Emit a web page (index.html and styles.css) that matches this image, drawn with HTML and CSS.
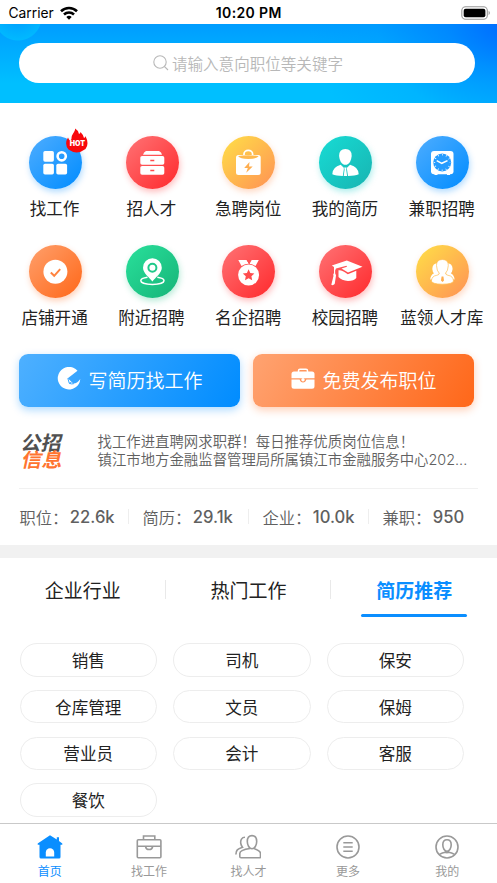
FILE: index.html
```html
<!DOCTYPE html>
<html lang="zh-CN">
<head>
<meta charset="utf-8">
<meta name="viewport" content="width=device-width, initial-scale=1">
<title>直聘网</title>
<link rel="stylesheet" href="styles.css">
</head>
<body>
<div class="app">
  <div class="status">
    <div class="carrier">Carrier
      <svg width="18" height="14" viewBox="0 0 18 14" fill="none" stroke="#000" stroke-width="2.6"><path d="M1 5.2A11.6 11.6 0 0 1 17 5.2"/><path d="M4 8.5A7.3 7.3 0 0 1 14 8.5"/><path d="M6.3 11A4 4 0 0 1 11.7 11L9 13.8Z" fill="#000" stroke="none"/></svg>
    </div>
    <div class="clock">10:20 PM</div>
    <svg class="battery" width="30" height="14" viewBox="0 0 30 14"><rect x=".8" y=".8" width="25.5" height="12.4" rx="3.8" fill="none" stroke="#999" stroke-width="1.1"/><rect x="2.7" y="2.7" width="21.7" height="8.6" rx="2" fill="#000"/><path d="M27.6 4.8Q30.2 7 27.6 9.2Z" fill="#999"/></svg>
  </div>

  <header class="header">
    <div class="search">
      <svg width="16" height="16" viewBox="0 0 16 16" fill="none" stroke="#b8b8b8" stroke-width="1.1"><circle cx="7" cy="7" r="6.2"/><path d="M11.3 11.3L15 15"/></svg>
      <span>请输入意向职位等关键字</span>
    </div>
  </header>

  <nav class="menu">
    <a class="entry"><span class="disc blue">
      <svg viewBox="0 0 53 53" fill="#fff"><rect x="14.3" y="15" width="10.6" height="10.7" rx="1.7"/><rect x="14.3" y="27.7" width="10.6" height="10.8" rx="1.7"/><rect x="27.3" y="27.7" width="10.8" height="10.8" rx="1.7"/><circle cx="32.7" cy="20.3" r="4.1" fill="none" stroke="#fff" stroke-width="2.6"/></svg>
      <span class="hot"><svg viewBox="0 0 22 25"><path d="M5.500 10.500C5.500 6 9 4.500 9.200 .5Q12.500 2.500 13 6Q14.500 5.500 14.500 4Q17.500 7 18 10Q19.500 9.500 19.500 8Q23.500 16 19.500 21Q11 27.500 2.500 21.500Q-2 16 2 9.500Q3 12 4 12.500Q5.500 12 5.500 10.500Z" fill="#f8080c"/></svg><b>HOT</b></span>
    </span>找工作</a>
    <a class="entry"><span class="disc red"><svg viewBox="0 0 53 53" fill="#fff"><path d="M20 15H33Q35.500 16 36 18.700H17Q17.700 16 20 15Z"/><rect x="14.300" y="20" width="24" height="8.700" rx="1.800"/><rect x="14.300" y="30" width="24" height="8.700" rx="1.800"/><path d="M24.300 24.400h4M24.300 34.500h4" stroke="#ff4c4e" stroke-width="1.500"/></svg></span>招人才</a>
    <a class="entry"><span class="disc gold"><svg viewBox="0 0 53 53"><path d="M22 20V18a4.300 3.600 0 0 1 8.600 0V20" fill="none" stroke="#fff" stroke-width="1.700"/><rect x="14" y="19" width="24.700" height="20" rx="2.500" fill="#fff"/><path d="M16 20Q26.300 18.500 36.700 20Q35 23 26.300 23Q18 23 16 20Z" fill="#ffb94e"/><path d="M27.500 26L22.200 32H25.800L24.200 36.800L30.700 30.500H27Z" fill="#ffae4f"/></svg></span>急聘岗位</a>
    <a class="entry"><span class="disc teal"><svg viewBox="0 0 53 53"><path d="M26.400 13Q32.800 13 32.700 20Q32 27 27.800 28.700H25Q20.800 27 20.100 20Q20 13 26.400 13Z" fill="#fff"/><path d="M21.700 28.800L24.800 31.800V33.500L23.800 40Q17 40 13.300 38.300Q13.500 31 21.700 28.800ZM31.100 28.800Q39.500 31 39.700 38.300Q36 40 29 40L28 33.500V31.800Z" fill="#fff"/><path d="M25.200 31.500h2.400l-.4 2l.9 6.500h-3.400l.9-6.500Z" fill="#fff"/></svg></span>我的简历</a>
    <a class="entry"><span class="disc blue"><svg viewBox="0 0 53 53"><rect x="15" y="15" width="22.500" height="23.200" rx="3" fill="#fff"/><path d="M18.500 37h3v2h-3zM31 37h3v2h-3z" fill="#fff"/><circle cx="26.200" cy="26.500" r="9" fill="#259cff"/><circle cx="26.200" cy="26.500" r="7.800" fill="none" stroke="#fff" stroke-width="1.600" stroke-dasharray=".7 3.384" stroke-dashoffset=".35"/><path d="M20.700 24.700L25.800 27.300L31.500 24.600" fill="none" stroke="#fff" stroke-width="1.500"/></svg></span>兼职招聘</a>
    <a class="entry"><span class="disc orange"><svg viewBox="0 0 53 53"><circle cx="26.400" cy="26.700" r="12" fill="#fff"/><path d="M21.800 27.600L25.200 30.800L31.200 24.200" fill="none" stroke="#ff833f" stroke-width="2"/></svg></span>店铺开通</a>
    <a class="entry"><span class="disc green"><svg viewBox="0 0 53 53"><path d="M21.500 32.300Q14.800 33.200 14.800 35.800C15 40.700 37.800 40.700 38 35.800Q38 33.200 31.300 32.300" fill="none" stroke="#fff" stroke-width="1.500"/><path d="M26.400 36.500C23.500 32.500 17 28 17 22.700a9.400 9.400 0 0 1 18.800 0C35.800 28 29.300 32.500 26.400 36.500Z" fill="#fff"/><circle cx="26.400" cy="22.700" r="4" fill="none" stroke="#20c98a" stroke-width="2"/></svg></span>附近招聘</a>
    <a class="entry"><span class="disc red"><svg viewBox="0 0 53 53"><path d="M16.300 15H24.600L27.300 19.200L29.700 15H36.800L33.500 21Q26.500 16.500 19.500 21Z" fill="#fff"/><path d="M24.800 14.500L28 20" stroke="#ff4f51" stroke-width="1"/><circle cx="26.600" cy="30" r="10.500" fill="#fff"/><path d="M26.600 24.300L28.300 28L32.400 28.500L29.400 31.300L30.200 35.300L26.600 33.300L23 35.300L23.800 31.300L20.800 28.500L24.900 28Z" fill="#ff4b4d"/></svg></span>名企招聘</a>
    <a class="entry"><span class="disc red"><svg viewBox="0 0 53 53" fill="#fff"><path d="M12.800 20.500L27.800 15.500L43.500 21.700L29 27.500L22.500 23.500L28 21.700L27.500 20.800L17 23.600Q15.700 25 16.200 28.500Q17.500 30 16.800 32L15.700 39Q14 40.800 12.300 39.800L14.500 31Q13.700 29.500 15 28V22Z"/><path d="M19.500 25.300Q22.500 24.500 28.800 29.300L37.300 25.700V33Q35 36 29 36Q22.500 35.500 19.500 32Z"/></svg></span>校园招聘</a>
    <a class="entry"><span class="disc gold"><svg viewBox="0 0 53 53"><g fill="#fff"><path d="M22.500 18Q16.300 18 16.300 24Q16.500 27 18 28.200Q14.500 30 14.200 34.500L21 34L23 28Z"/><path d="M30.300 18Q36.600 18 36.600 24Q36.300 27 34.800 28.200Q38.300 30 38.600 34.500L32 34L30 28Z"/></g><path d="M26.400 14.500Q32.500 14.500 32.300 20.500Q32 26 29.500 28.300Q30 30 32 30.300Q37.200 31 37.500 36Q37 39 26.400 39.200Q15.700 39 15.400 36Q15.700 31 20.800 30.300Q23 30 23.300 28.300Q20.700 26 20.500 20.500Q20.300 14.500 26.400 14.500Z" fill="#fff" stroke="#ffbd50" stroke-width=".7"/><path d="M25.600 31.500h1.800l.6 4-1.500 1.500-1.500-1.500Z" fill="#ffae4f"/></svg></span>蓝领人才库</a>
  </nav>

  <div class="actions">
    <a class="action resume"><svg width="24" height="24" viewBox="0 0 24 24"><path d="M20.500 3.700A11.300 11.300 0 1 0 23.300 12Q20 16.800 16.200 16.600L10.800 11.300Z" fill="#fff"/><path d="M10.800 11.300L12.300 16.300Q14.500 17.300 16.800 16.700M14.600 15.200L12.300 16.300" fill="none" stroke="#35a5ff" stroke-width="1"/></svg>写简历找工作</a>
    <a class="action post"><svg width="24" height="24" viewBox="0 0 24 24"><path d="M7.500 5V3.800Q7.500 2.300 9 2.300H15Q16.500 2.300 16.500 3.800V5" fill="none" stroke="#fff" stroke-width="1.500"/><path d="M3 4.500H21Q23.500 4.500 23.500 7V11.200H.5V7Q.5 4.500 3 4.500ZM.5 12.500H8.600Q9.500 15.500 12 15.500Q14.500 15.500 15.400 12.500H23.500V19.200Q23.500 21.700 21 21.700H3Q.5 21.700 .5 19.200Z" fill="#fff"/><circle cx="12" cy="12.700" r="1.700" fill="#fff"/></svg>免费发布职位</a>
  </div>

  <section class="news">
    <div class="brand"><b>公招</b><b class="accent">信息</b></div>
    <div class="headlines"><p>找工作进直聘网求职群！每日推荐优质岗位信息！</p><p>镇江市地方金融监督管理局所属镇江市金融服务中心202...</p></div>
  </section>

  <section class="stats">
    <div>职位：<b>22.6k</b></div><div>简历：<b>29.1k</b></div><div>企业：<b>10.0k</b></div><div>兼职：<b>950</b></div>
  </section>

  <section class="picks">
    <div class="tabs"><a>企业行业</a><a>热门工作</a><a class="active">简历推荐</a></div>
    <div class="chips"><a>销售</a><a>司机</a><a>保安</a><a>仓库管理</a><a>文员</a><a>保姆</a><a>营业员</a><a>会计</a><a>客服</a><a>餐饮</a></div>
  </section>

  <nav class="tabbar">
    <a class="current"><svg viewBox="0 0 26 26"><path d="M.7 9.600L13 1.300L19.800 5.500V3.200H22V7L25.300 9.600V10.800H23.500V23Q23.500 24.600 22 24.600H4Q2.500 24.600 2.500 23V10.800H.7Z" fill="#0a8eff"/><path d="M8.800 22.500V18.500a4.200 4.200 0 0 1 8.400 0V22.500Z" fill="#fff"/></svg>首页</a>
    <a><svg viewBox="0 0 26 26" fill="none" stroke="#999" stroke-width="1.600"><rect x="1.300" y="5.800" width="23.600" height="18" rx="1"/><path d="M7.500 5.800V2H18.800V5.800M1.300 12.300H24.900M9.500 12.300Q10 15.500 13.100 15.500Q16.200 15.500 16.700 12.300"/></svg>找工作</a>
    <a><svg viewBox="0 0 26 26" fill="none" stroke="#999" stroke-width="1.600"><path d="M17 1.600C13.500 1.600 12.300 4 12.300 7.500C12.300 11 14.300 14.800 17 14.800C19.700 14.800 21.700 11 21.700 7.500C21.700 4 20.500 1.600 17 1.600Z"/><path d="M15 14.500C11 15 4.800 16.500 4.800 19.500V22.500Q4.800 23.800 6.100 23.800H24.600Q25.500 23.800 25.500 22.500V19.500C25.500 16.500 22 15.500 19 14.500M10 3.300C6.800 3.300 5.200 6 5.800 9.500Q6.200 11.800 7.500 13.200C2.500 15 .9 16 .9 20.500"/></svg>找人才</a>
    <a><svg viewBox="0 0 26 26" fill="none" stroke="#999" stroke-width="1.600"><circle cx="13" cy="13" r="11"/><path d="M8.300 8.800h9.400M8.300 13h9.400M8.300 17.200h9.400"/></svg>更多</a>
    <a><svg viewBox="0 0 26 26" fill="none" stroke="#999" stroke-width="1.600"><circle cx="13" cy="13" r="11"/><path d="M13 5.800C10 5.800 8.800 8 8.800 10.800C8.800 14 10.500 17.300 13 17.300C15.500 17.300 17.200 14 17.200 10.800C17.200 8 16 5.800 13 5.800ZM5 20.600Q8.500 18.600 11.300 18.200V16.500M21 20.600Q17.500 18.600 14.700 18.200V16.500M11.300 18.200Q13 19 14.700 18.200"/></svg>我的</a>
  </nav>
</div>
</body>
</html>
```
FILE: styles.css
```css
* { box-sizing: border-box; }
body { margin: 0; background: #fff; color: #222; font-family: Inter, "Noto Sans CJK SC", sans-serif; }
p { margin: 0; }
.app { width: 497px; height: 883px; display: flex; flex-direction: column; overflow: hidden; }

.status { height: 24px; flex: none; display: grid; grid-template-columns: 1fr auto 1fr; align-items: center; padding: 1px 6px 0 8.5px; color: #000; font-size: 14px; }
.carrier { display: flex; align-items: center; gap: 6px; font-size: 13.8px; }
.clock { font-weight: 600; font-size: 14px; letter-spacing: .35px; margin-right: 2px; }
.battery { justify-self: end; }

.header {
  height: 79px; flex: none; padding: 19px 22px 0 19px;
  background:
    radial-gradient(circle at 18px -7px, rgba(0,200,255,0) 0, rgba(0,200,255,.55) 23px, transparent 24px),
    radial-gradient(ellipse 200px 150px at 102% 0, #006cff 0, rgba(0,125,255,.65) 30%, rgba(0,150,255,.25) 65%, rgba(0,160,255,0) 100%),
    linear-gradient(#009dff, #00bfff 75%);
}
.search { height: 40px; border-radius: 20px; background: #fff; display: flex; align-items: center; justify-content: center; gap: 3px; padding-left: 2px; color: #b8b8b8; font-size: 15.55px; font-weight: 350; }

.menu { flex: none; display: grid; grid-template-columns: repeat(5, 96.8px); grid-auto-rows: 109px; padding: 33px 0 0 6.2px; height: 251px; }
.entry { display: flex; flex-direction: column; align-items: center; font-size: 16.6px; line-height: 24px; gap: 7.5px; white-space: nowrap; }
.disc { width: 53px; height: 53px; border-radius: 50%; position: relative; flex: none; left: .8px; }
.disc > svg { display: block; width: 53px; height: 53px; }
.blue { background: linear-gradient(135deg, #4eadff, #008cff); box-shadow: 1px 3px 6px rgba(0,140,255,.3); }
.red { background: linear-gradient(135deg, #ff7375, #ff292c); box-shadow: 1px 3px 6px rgba(255,41,44,.3); }
.gold { background: linear-gradient(135deg, #ffe047, #ff9155); box-shadow: 1px 3px 6px rgba(255,145,85,.35); }
.teal { background: linear-gradient(135deg, #17dcd5, #18b4b1); box-shadow: 1px 3px 6px rgba(23,205,200,.35); }
.orange { background: linear-gradient(135deg, #ffa06c, #ff6718); box-shadow: 1px 3px 6px rgba(255,103,24,.3); }
.green { background: linear-gradient(135deg, #29e09b, #16b478); box-shadow: 1px 3px 6px rgba(24,190,125,.3); }
.hot { position: absolute; left: 37.5px; top: -8px; width: 22px; height: 25px; }
.hot svg { display: block; width: 22px; height: 25px; }
.hot b { position: absolute; left: 0; right: 0; top: 10px; text-align: center; color: #fff; font-size: 7px; line-height: 12px; font-weight: 900; }

.actions { flex: none; display: grid; grid-template-columns: 221px 221px; gap: 13px; padding-left: 19px; }
.action { height: 53px; border-radius: 9px; display: flex; align-items: center; justify-content: center; gap: 7px; color: #fff; font-size: 19px; font-weight: 350; padding: 0 0 3px 1px; }
.resume { background: linear-gradient(120deg, #4eb0ff, #008cff); box-shadow: 0 3px 9px rgba(0,140,255,.32); }
.post { background: linear-gradient(120deg, #ffa371, #ff6719); box-shadow: 0 3px 9px rgba(255,103,24,.32); }

.news { flex: none; height: 82px; margin: 0 19px; padding-top: 25px; border-bottom: 1px solid #f1f1f1; display: flex; color: #606060; }
.brand { width: 78.5px; padding: 3px 0 0; transform: skewX(-12deg) scaleX(1.04); transform-origin: 20px 50%; font-size: 19.5px; line-height: 17px; color: #505050; }
.brand b { display: block; font-weight: 700; }
.brand .accent { color: #ff7430; padding-left: 4px; }
.headlines { font-size: 14.4px; line-height: 18px; padding-top: 1px; font-weight: 350; white-space: nowrap; }

.stats { flex: none; height: 56px; display: grid; grid-template-columns: 108.5px 120px 120px 120px; padding: 0 0 1px 19.5px; align-items: center; color: #606060; font-size: 16.3px; font-weight: 350; white-space: nowrap; }
.stats div { display: flex; align-items: center; height: 15px; }
.stats div + div { border-left: 1px solid #eee; padding-left: 13.5px; }
.stats b { font-weight: 500; font-size: 16.6px; margin-left: 1.5px; }

.picks { flex: none; height: 278px; border-top: 13px solid #f1f1f1; }
.tabs { display: grid; grid-template-columns: repeat(3, 1fr); height: 60px; }
.tabs a { display: flex; align-items: center; justify-content: center; position: relative; font-size: 19px; padding-top: 2px; }
.tabs a + a::before { content: ""; position: absolute; left: -1px; top: 22px; width: 1px; height: 19px; background: #e9e9e9; }
.tabs .active { color: #0a8eff; font-weight: 700; }
.tabs .active::after { content: ""; position: absolute; left: 30px; right: 30px; top: 56px; height: 3px; border-radius: 2px; background: #0a8eff; }
.chips { display: grid; grid-template-columns: repeat(3, 137.5px); grid-auto-rows: 33.6px; gap: 13.2px 16px; padding: 25px 0 0 19.5px; }
.chips a { border: 1px solid #ededed; border-radius: 17px; display: flex; align-items: center; justify-content: center; font-size: 16.6px; }

.tabbar { flex: none; height: 60px; border-top: 1px solid #c9c9c9; display: grid; grid-template-columns: repeat(5, 1fr); padding-top: 10px; }
.tabbar a { display: flex; flex-direction: column; align-items: center; gap: 3px; color: #999; font-size: 12px; line-height: 17px; }
.tabbar svg { width: 26px; height: 26px; display: block; }
.tabbar .current { color: #0a8eff; }
```
